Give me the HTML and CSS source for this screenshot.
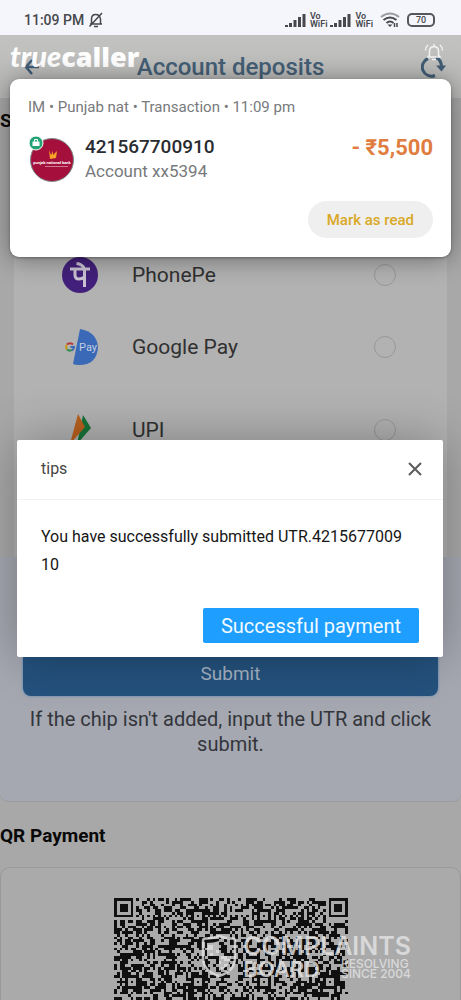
FILE: index.html
```html
<!DOCTYPE html>
<html lang="en">
<head>
<meta charset="utf-8">
<meta name="viewport" content="width=device-width, initial-scale=1">
<title>Account deposits</title>
<link rel="stylesheet" href="styles.css">
</head>
<body>
<div class="screen">
  <div class="status">
    <div class="status-group">
      <span>11:09 PM</span>
      <svg width="16" height="16" viewBox="0 0 16 16" fill="none" stroke="#46484d" stroke-width="1.5"><path d="M2 12h12M3.5 12V7c0-6 8-6 9 0v5M1.5 14.5L14 1M6 14.5h4"/></svg>
    </div>
    <div class="status-group status-right">
      <svg width="22" height="15" viewBox="0 0 22 15" fill="#46484d"><path d="M0 12h3v2H0zM4 10h3v4H4zM8.500 7h3v7h-3zM13 4h3v10h-3zM17.500 1h3v13h-3z"/></svg>
      <span class="vowifi">Vo<br>WiFi</span>
      <svg width="22" height="15" viewBox="0 0 22 15" fill="#46484d"><path d="M0 12h3v2H0zM4 10h3v4H4zM8.500 7h3v7h-3zM13 4h3v10h-3zM17.500 1h3v13h-3z"/></svg>
      <span class="vowifi">Vo<br>WiFi</span>
      <svg class="wifi" width="20" height="16" viewBox="0 0 20 16" fill="none" stroke="#46484d" stroke-width="2"><path d="M1 5q9-7 18 0" stroke="#9b9da2"/><path d="M3.500 8q6.500-5 13 0M6.500 11q3.500-3 7 0"/><path d="M7.500 12.500l2.500 2.500 2.500-2.500z" fill="#46484d" stroke="none"/><path d="M14.500 11v4M17 11v4" stroke-width="1.500"/></svg>
      <span class="battery">70</span>
    </div>
  </div>

  <header class="topbar">
    <button class="icon-btn" aria-label="Back"><svg width="16" height="18" viewBox="0 0 16 18" fill="none" stroke="#405c75" stroke-width="2.500"><path d="M8 2L2 9l6 7M2 9h13"/></svg></button>
    <h1>Account deposits</h1>
    <button class="icon-btn" aria-label="Refresh"><svg width="26" height="24" viewBox="0 0 26 24" fill="none" stroke="#405c75" stroke-width="3"><path d="M14 20.500A9 9 0 0 1 7 3.500M15 2.500q5 2 5.500 9"/><path d="M15 10.500h10l-4.500 6z" fill="#405c75" stroke="none"/></svg></button>
  </header>

  <main>
    <h2 class="section-title">S</h2>
    <div class="methods">
      <label class="method">
        <svg width="38" height="38" viewBox="0 0 38 38"><circle cx="19" cy="19" r="18" fill="#43207b"/><path d="M9 13h20M23.500 13v18M14 14v5q0 4 4 4 3 0 5.500-2M23.500 13q-2-5-8-5.500" fill="none" stroke="#cbc3d3" stroke-width="3"/></svg>
        <span>PhonePe</span><input type="radio" name="method">
      </label>
      <label class="method">
        <svg width="38" height="38" viewBox="0 0 38 38"><path d="M19 1Q36 4 37 19q-1 18-19 18-4 0-6-1z" fill="#3969b7"/><g fill="none" stroke-width="2"><path d="M12 16.500a4 4 0 0 0-6 0" stroke="#b63a37"/><path d="M6 16.500q-2 2.500 0 5" stroke="#c49a25"/><path d="M6 21.500q2.500 2 5 .5" stroke="#2d8b4d"/><path d="M9.500 19H13q0 2-2 3.500" stroke="#3969b7"/></g><text class="gpay-word" x="18" y="23">Pay</text></svg>
        <span>Google Pay</span><input type="radio" name="method">
      </label>
      <label class="method method-tall">
        <svg width="38" height="38" viewBox="0 0 38 38"><path d="M22 4l8 13-14 16z" fill="#167338"/><path d="M17 3l7 13L9 33z" fill="#b9611d"/></svg>
        <span>UPI</span><input type="radio" name="method">
      </label>
    </div>

    <section class="submit-panel">
      <button class="submit">Submit</button>
      <p>If the chip isn't added, input the UTR and click submit.</p>
    </section>

    <h2 class="section-title qr-title">QR Payment</h2>
    <div class="qr-card">
      <svg class="qr" viewBox="0 0 85 85" shape-rendering="crispEdges" role="img" aria-label="QR code"><path id="qr-modules"/></svg>
    </div>
  </main>

  <div class="brand" aria-label="truecaller"><i>true</i>caller</div>
  <svg class="bell" width="20" height="18" viewBox="0 0 20 18" fill="none" stroke="#f2f2f2" stroke-width="1.500"><path d="M4 14h12l-1.500-2V8q0-4-4.500-4.500Q5.500 4 5.500 8v4zM10 3.500V1M8 16.500h4M4 2Q1.500 4 1.500 7.500M16 2q2.500 2 2.500 5.500"/></svg>

  <aside class="notice">
    <p class="notice-meta">IM • Punjab nat • Transaction • 11:09 pm</p>
    <div class="notice-row">
      <svg width="48" height="48" viewBox="0 0 48 48"><circle cx="24" cy="25" r="21.500" fill="#a40f3b" stroke="#7f8c86"/><path d="M21 15l2 5 2-4v4l4-4-1 7-6 1z" fill="#f6a326"/><text class="bank-name" x="24" y="29" text-anchor="middle">punjab national bank</text><path d="M17 31.500h23" stroke="#d995a8" stroke-width=".8"/><circle cx="8" cy="8" r="7" fill="#23a373" stroke="#fff"/><path d="M4.500 6.500h7v4.500h-7z" fill="#fff"/><path d="M6.500 6.500V4.500h3v2" fill="none" stroke="#fff"/></svg>
      <div class="notice-id"><strong>421567700910</strong><span>Account xx5394</span></div>
      <b class="amount">- ₹5,500</b>
    </div>
    <button class="mark">Mark as read</button>
  </aside>

  <div class="dialog" role="dialog" aria-labelledby="tips">
    <div class="dialog-head">
      <span id="tips">tips</span>
      <button class="icon-btn" aria-label="Close"><svg width="14" height="14" viewBox="0 0 14 14" stroke="#5b5b5b" stroke-width="2"><path d="M1 1l12 12M13 1L1 13"/></svg></button>
    </div>
    <p>You have successfully submitted UTR.421567700910</p>
    <button class="confirm">Successful payment</button>
  </div>

  <div class="watermark">
    <svg width="36" height="44" viewBox="0 0 36 44" fill="none" stroke="#e4e4e4"><path d="M18 2q7 3 14 2.500 2 0 2 3V24q0 13-16 18Q2 37 2 24V7.500q0-3 2-3Q11 5 18 2z" stroke-width="2.500"/><path d="M18 7v15H6V9q7 0 12-2zM18 22h12q0 10-12 15z" fill="#e4e4e4" stroke="none"/></svg>
    <div>
      <div class="wm-top">COMPLAINTS</div>
      <div class="wm-bottom"><span>BOARD</span><small>RESOLVING<br>SINCE 2004</small></div>
    </div>
  </div>
</div>
<script src="qr.js"></script>
</body>
</html>
```
FILE: styles.css
```css
* { box-sizing: border-box; }
body, h1, h2, p { margin: 0; }
body { font-family: Roboto, "Noto Sans", sans-serif; background: #a8a8a8; }
button { border: 0; font-family: inherit; padding: 0; }
.icon-btn { display: flex; background: none; }

.screen { position: relative; height: 100vh; overflow: hidden; background: #a8a8a8; }

.status { display: flex; justify-content: space-between; align-items: center; height: 35px; padding: 5px 26px 0 24px; background: #f5f6fb; color: #46484d; font-size: 14px; font-weight: 500; }
.status-group { display: flex; align-items: center; gap: 4px; }
.status-right { gap: 3px; }
.vowifi { font-size: 9px; line-height: 8px; font-weight: 600; }
.wifi { margin: 0 4px; }
.battery { width: 28px; border: 2px solid #55575c; border-radius: 5px; font-size: 9px; line-height: 10px; text-align: center; }

.topbar { display: flex; justify-content: space-between; align-items: center; height: 63px; padding: 0 14px 0 24px; background: linear-gradient(#c2c2c1, #b8b8b7); }
.topbar h1 { color: #455f76; font-size: 24px; font-weight: 500; }

.section-title { padding: 12px 0; font-size: 19px; line-height: 22px; font-weight: 700; color: #090909; }
.methods { margin: 0 14px; padding: 95px 47px 80px; background: #b2b2b2; }
.method { display: flex; align-items: center; height: 72px; gap: 33px; font-size: 21px; color: #303030; }
.method span { flex: 1; }
.method-tall { height: 94px; }
.method input { appearance: none; width: 22px; height: 22px; margin: 0 4px 0 0; border: 1px solid #989898; border-radius: 50%; }
.gpay-word { font-size: 11px; fill: #c5d0e2; }

.submit-panel { padding: 94px 23px 44px; background: #a5a8b1; border-bottom: 1px solid #999a9f; border-radius: 0 0 8px 8px; text-align: center; }
.submit { width: 100%; height: 45px; border-radius: 8px; background: #24527e; color: #a5b3c3; font-size: 19px; box-shadow: 0 0 3px #5687bb; }
.submit-panel p { padding-top: 11px; font-size: 20px; line-height: 25px; color: #33353b; }
.qr-title { padding: 23px 0 20px; }
.qr-card { display: flex; justify-content: center; padding: 30px 0; border: 1px solid #999; border-radius: 10px; background: #aaa; }
.qr { width: 234px; height: 234px; }
#qr-modules { fill: #101010; }

.brand { position: absolute; left: 10px; top: 38px; color: #fff; font-family: "Open Sans", sans-serif; font-size: 27px; line-height: 36px; font-weight: 800; }
.brand i { font-family: Lato, sans-serif; font-size: 29px; font-weight: 900; }
.bell { position: absolute; right: 17px; top: 43px; }

.notice { position: absolute; top: 79px; left: 10px; right: 10px; padding: 18px 18px 19px; border-radius: 9px; background: #fff; box-shadow: 0 2px 26px rgba(0, 0, 0, .4), 0 1px 3px rgba(0, 0, 0, .3); }
.notice-meta { font-size: 15px; line-height: 20px; color: #77797c; }
.notice-row { display: flex; align-items: center; gap: 9px; padding: 17px 0; }
.notice-id { flex: 1; display: flex; flex-direction: column; font-size: 17px; line-height: 25px; color: #77797c; }
.notice-id strong { font-size: 19px; font-weight: 500; color: #292c31; }
.amount { align-self: flex-start; font-size: 22px; line-height: 28px; color: #e07d40; }
.bank-name { font-size: 4px; font-weight: 700; fill: #fff; }
.mark { display: block; margin-left: auto; height: 37px; padding: 0 19px; border-radius: 19px; background: #efefef; color: #d9a827; font-size: 15px; font-weight: 500; }

.dialog { position: absolute; top: 440px; left: 17px; right: 18px; padding-bottom: 14px; border-radius: 2px; background: #fff; box-shadow: 0 0 50px rgba(0, 0, 0, .3); }
.dialog-head { display: flex; justify-content: space-between; align-items: center; height: 60px; padding: 0 21px 2px 24px; border-bottom: 1px solid #f2f2f2; font-size: 16px; color: #464646; }
.dialog p { padding: 23px 34px 29px 24px; font-size: 16px; line-height: 28px; color: #161616; word-break: break-all; }
.confirm { display: block; margin: 0 24px 0 auto; height: 35px; padding: 0 18px; border-radius: 2px; background: #1e9fff; color: #f0faff; font-size: 20px; }

.watermark { position: absolute; right: 50px; top: 934px; display: flex; gap: 6px; color: #e4e4e4; opacity: .8; font-family: Inter, sans-serif; font-weight: 600; }
.wm-top { font-size: 25px; line-height: 24px; }
.wm-bottom { display: flex; justify-content: space-between; align-items: center; font-size: 22px; line-height: 22px; }
.wm-bottom small { font-size: 12px; line-height: 10px; font-weight: 500; }
```
FILE: qr.js
```js
// Version 17 symbol: 85 modules per side, alignment marks every 24 modules.
const N = 85;
const marks = [6, 30, 54, 78];
let seed = 421567;
function bit() {
  seed = (seed * 1664525 + 1013904223) % 4294967296;
  return seed / 4294967296 < 0.52;
}
const ring = (d) => Math.max(Math.abs(d[0]), Math.abs(d[1]));

function dark(x, y) {
  const random = bit();
  for (const [cx, cy] of [[3, 3], [N - 4, 3], [3, N - 4]]) {
    const r = ring([x - cx, y - cy]);
    if (r <= 4) return r < 2 || r === 3;
  }
  for (const cx of marks) {
    for (const cy of marks) {
      const corner = (cx === 6 && cy !== 30 && cy !== 54) || (cy === 6 && cx === 78);
      const r = ring([x - cx, y - cy]);
      if (!corner && r <= 2) return r !== 1;
    }
  }
  if (x === 6 || y === 6) return (x + y) % 2 === 0;
  return random;
}

let d = "";
for (let y = 0; y < N; y++) {
  for (let x = 0; x < N; x++) {
    if (dark(x, y)) d += `M${x} ${y}h1v1h-1z`;
  }
}
document.getElementById("qr-modules").setAttribute("d", d);
```
